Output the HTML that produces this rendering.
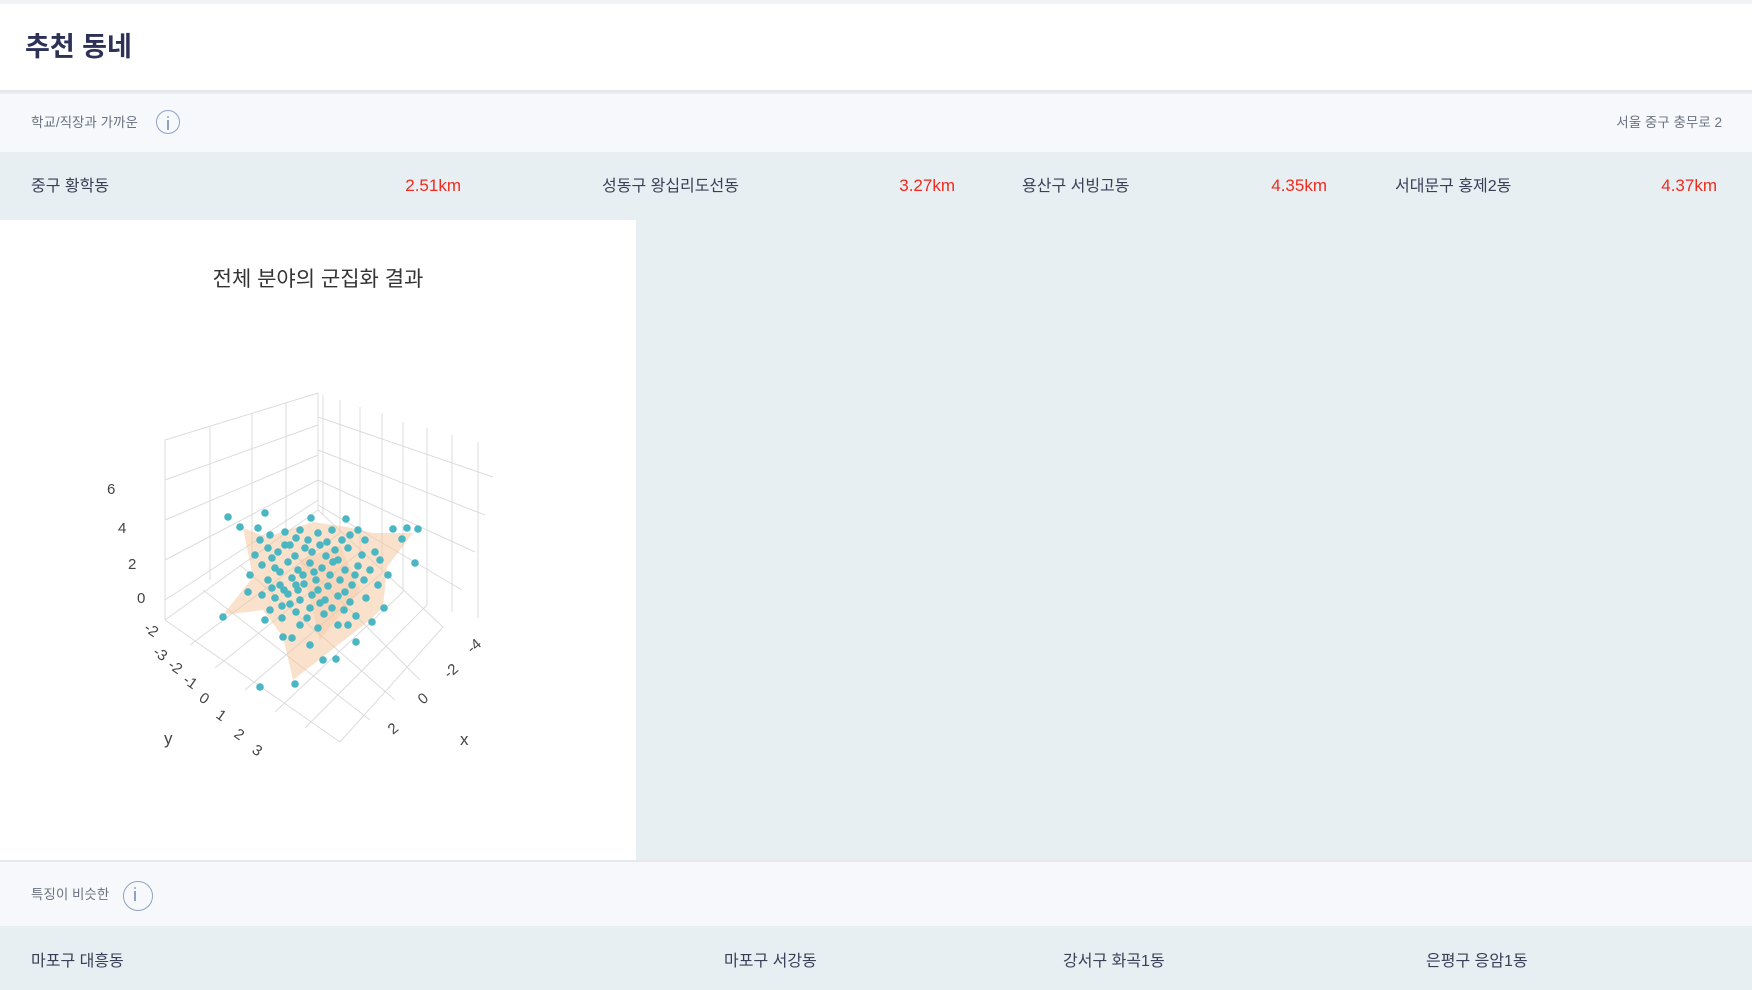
<!DOCTYPE html>
<html><head><meta charset="utf-8"><style>
*{margin:0;padding:0;box-sizing:border-box}
body{width:1752px;height:990px;overflow:hidden;background:#e8eff3;font-family:"Liberation Sans","Noto Sans CJK KR",sans-serif;position:relative}
.a{position:absolute;white-space:nowrap;line-height:24px}
.top{position:absolute;left:0;top:0;width:1752px;height:4px;background:#f2f3f5}
.hdr{position:absolute;left:0;top:4px;width:1752px;height:88px;background:#fff;border-bottom:2px solid #e6e8ec}
.sec{position:absolute;left:0;width:1752px;background:#f7f8fb}
.row{position:absolute;left:0;width:1752px;background:#e8eff3}
.t17{font-size:16px;color:#3a3f55}
.km{font-size:17px;color:#f02a1e}
.sm{font-size:13.5px;color:#6b7280}
.info{position:absolute;width:24px;height:24px;border:1.6px solid #8ea3c2;border-radius:50%}
.info:before{content:"";position:absolute;left:10px;top:5px;width:2px;height:2px;background:#8ea3c2;border-radius:50%}
.info:after{content:"";position:absolute;left:10.3px;top:9px;width:1.4px;height:10px;background:#8ea3c2}
</style></head><body>
<div class="top"></div>
<div class="hdr"></div>
<div class="a" style="left:25px;top:35px;font-size:27px;font-weight:bold;color:#2d3057">추천 동네</div>
<div class="sec" style="top:94px;height:58px"></div>
<div class="a sm" style="left:31px;top:111px">학교/직장과 가까운</div>
<div class="info" style="left:156px;top:110px"></div>
<div class="a sm" style="right:30px;top:111px">서울 중구 충무로 2</div>
<div class="row" style="top:152px;height:68px"></div>
<div class="a t17" style="left:31px;top:175px">중구 황학동</div>
<div class="a km" style="right:1291px;top:174px">2.51km</div>
<div class="a t17" style="left:602px;top:175px">성동구 왕십리도선동</div>
<div class="a km" style="right:797px;top:174px">3.27km</div>
<div class="a t17" style="left:1022px;top:175px">용산구 서빙고동</div>
<div class="a km" style="right:425px;top:174px">4.35km</div>
<div class="a t17" style="left:1395px;top:175px">서대문구 홍제2동</div>
<div class="a km" style="right:35px;top:174px">4.37km</div>
<div class="a" style="left:0;top:220px;width:636px;height:640px;background:#fff"></div>
<div class="a" style="left:0;top:268px;width:636px;text-align:center;font-size:21px;color:#333">전체 분야의 군집화 결과</div>
<svg class="a" style="left:0;top:0" width="636" height="860" viewBox="0 0 636 860">
<g stroke="#dcdcdc" stroke-width="1" fill="none">
<path d="M165 440L165 620M210 427L210 580M252 413L252 560M286 403L286 535M318 393L318 510"/>
<path d="M165 440L318 393M165 480L318 425M165 520L318 455M165 560L318 480M165 600L318 500"/>
<path d="M323 395L323 515M340 400L340 533M360 407L360 552M382 413L382 573M403 422L403 592M427 428L427 605M452 435L452 612M478 442L478 618"/>
<path d="M318 417L493 477M318 450L485 515M318 480L475 552M318 505L462 590"/>
<path d="M165 620L340 742M203 590L370 720M240 565L395 700M280 540L420 680M318 510L443 627"/>
<path d="M318 510L165 620M340 533L190 645M360 552L215 668M382 573L245 690M403 592L275 712M427 605L305 728M443 627L340 742"/>
</g>
<polygon points="243,528 267,537 313,522 347,527 373,533 413,533 387,567 383,607 370,620 293,680 283,637 263,610 223,615 253,577" fill="#f3c49a" opacity=".5"/>
<polygon points="300,560 340,545 360,590 320,640" fill="#f3c49a" opacity=".35"/>
<g fill="#4ab6c1">
<circle cx="228" cy="517" r="3.8"/><circle cx="265" cy="513" r="3.8"/><circle cx="240" cy="527" r="3.8"/><circle cx="311" cy="518" r="3.8"/><circle cx="346" cy="519" r="3.8"/><circle cx="223" cy="617" r="3.8"/><circle cx="260" cy="687" r="3.8"/><circle cx="295" cy="684" r="3.8"/><circle cx="323" cy="660" r="3.8"/><circle cx="336" cy="659" r="3.8"/><circle cx="418" cy="529" r="3.8"/><circle cx="407" cy="528" r="3.8"/><circle cx="393" cy="529" r="3.8"/><circle cx="402" cy="539" r="3.8"/><circle cx="415" cy="563" r="3.8"/><circle cx="372" cy="622" r="3.8"/><circle cx="384" cy="608" r="3.8"/><circle cx="283" cy="637" r="3.8"/><circle cx="292" cy="638" r="3.8"/>
<circle cx="260" cy="540" r="3.8"/><circle cx="270" cy="535" r="3.8"/><circle cx="285" cy="532" r="3.8"/><circle cx="300" cy="530" r="3.8"/><circle cx="318" cy="533" r="3.8"/><circle cx="332" cy="530" r="3.8"/><circle cx="350" cy="535" r="3.8"/><circle cx="365" cy="540" r="3.8"/><circle cx="255" cy="555" r="3.8"/><circle cx="268" cy="548" r="3.8"/><circle cx="278" cy="552" r="3.8"/><circle cx="290" cy="545" r="3.8"/><circle cx="305" cy="548" r="3.8"/><circle cx="320" cy="545" r="3.8"/><circle cx="335" cy="550" r="3.8"/><circle cx="348" cy="548" r="3.8"/><circle cx="362" cy="555" r="3.8"/><circle cx="375" cy="552" r="3.8"/>
<circle cx="262" cy="565" r="3.8"/><circle cx="275" cy="568" r="3.8"/><circle cx="288" cy="562" r="3.8"/><circle cx="298" cy="570" r="3.8"/><circle cx="310" cy="563" r="3.8"/><circle cx="322" cy="568" r="3.8"/><circle cx="333" cy="562" r="3.8"/><circle cx="345" cy="570" r="3.8"/><circle cx="358" cy="566" r="3.8"/><circle cx="370" cy="570" r="3.8"/><circle cx="250" cy="575" r="3.8"/>
<circle cx="268" cy="580" r="3.8"/><circle cx="280" cy="585" r="3.8"/><circle cx="292" cy="578" r="3.8"/><circle cx="304" cy="584" r="3.8"/><circle cx="316" cy="580" r="3.8"/><circle cx="328" cy="586" r="3.8"/><circle cx="340" cy="580" r="3.8"/><circle cx="352" cy="585" r="3.8"/><circle cx="364" cy="580" r="3.8"/><circle cx="378" cy="585" r="3.8"/>
<circle cx="262" cy="595" r="3.8"/><circle cx="275" cy="598" r="3.8"/><circle cx="288" cy="594" r="3.8"/><circle cx="300" cy="600" r="3.8"/><circle cx="312" cy="595" r="3.8"/><circle cx="325" cy="600" r="3.8"/><circle cx="338" cy="596" r="3.8"/><circle cx="350" cy="602" r="3.8"/><circle cx="366" cy="598" r="3.8"/>
<circle cx="270" cy="610" r="3.8"/><circle cx="282" cy="606" r="3.8"/><circle cx="296" cy="612" r="3.8"/><circle cx="310" cy="608" r="3.8"/><circle cx="324" cy="614" r="3.8"/><circle cx="344" cy="610" r="3.8"/><circle cx="356" cy="616" r="3.8"/><circle cx="300" cy="625" r="3.8"/><circle cx="318" cy="628" r="3.8"/><circle cx="338" cy="625" r="3.8"/><circle cx="356" cy="642" r="3.8"/><circle cx="310" cy="645" r="3.8"/>
<circle cx="280" cy="572" r="3.8"/><circle cx="295" cy="556" r="3.8"/><circle cx="308" cy="540" r="3.8"/><circle cx="326" cy="556" r="3.8"/><circle cx="342" cy="540" r="3.8"/><circle cx="298" cy="590" r="3.8"/><circle cx="314" cy="572" r="3.8"/><circle cx="330" cy="575" r="3.8"/><circle cx="284" cy="590" r="3.8"/><circle cx="272" cy="558" r="3.8"/><circle cx="358" cy="530" r="3.8"/><circle cx="380" cy="560" r="3.8"/><circle cx="388" cy="575" r="3.8"/><circle cx="248" cy="592" r="3.8"/><circle cx="258" cy="528" r="3.8"/>
<circle cx="285" cy="545" r="3.8"/><circle cx="296" cy="538" r="3.8"/><circle cx="312" cy="552" r="3.8"/><circle cx="327" cy="542" r="3.8"/><circle cx="303" cy="575" r="3.8"/><circle cx="318" cy="590" r="3.8"/><circle cx="290" cy="604" r="3.8"/><circle cx="332" cy="608" r="3.8"/><circle cx="345" cy="592" r="3.8"/><circle cx="355" cy="575" r="3.8"/><circle cx="272" cy="588" r="3.8"/><circle cx="265" cy="620" r="3.8"/><circle cx="338" cy="560" r="3.8"/><circle cx="307" cy="618" r="3.8"/><circle cx="320" cy="603" r="3.8"/><circle cx="296" cy="585" r="3.8"/><circle cx="282" cy="618" r="3.8"/><circle cx="348" cy="625" r="3.8"/>
</g>
<g font-family="Liberation Sans, sans-serif" font-size="15" fill="#444">
<text x="107" y="494">6</text><text x="118" y="533">4</text><text x="128" y="569">2</text><text x="137" y="603">0</text>
<text transform="translate(143,630) rotate(35)">-2</text>
<text transform="translate(152,654) rotate(35)">-3</text><text transform="translate(167,667) rotate(35)">-2</text><text transform="translate(182,682) rotate(35)">-1</text><text transform="translate(198,700) rotate(35)">0</text><text transform="translate(215,717) rotate(35)">1</text><text transform="translate(233,736) rotate(35)">2</text><text transform="translate(251,752) rotate(35)">3</text>
<text x="164" y="744" font-size="17">y</text>
<text transform="translate(472,654) rotate(-40)">-4</text><text transform="translate(449,679) rotate(-40)">-2</text><text transform="translate(423,705) rotate(-40)">0</text><text transform="translate(393,735) rotate(-40)">2</text>
<text x="460" y="745" font-size="17">x</text>
</g>
</svg>
<div class="sec" style="top:860px;height:66px;border-top:2px solid #e6e8ec"></div>
<div class="a sm" style="left:31px;top:883px">특징이 비슷한</div>
<div class="info" style="left:123px;top:881px;width:30px;height:30px"></div>
<div class="row" style="top:926px;height:64px"></div>
<div class="a t17" style="left:31px;top:950px">마포구 대흥동</div>
<div class="a t17" style="left:724px;top:950px">마포구 서강동</div>
<div class="a t17" style="left:1063px;top:950px">강서구 화곡1동</div>
<div class="a t17" style="left:1426px;top:950px">은평구 응암1동</div>
</body></html>
